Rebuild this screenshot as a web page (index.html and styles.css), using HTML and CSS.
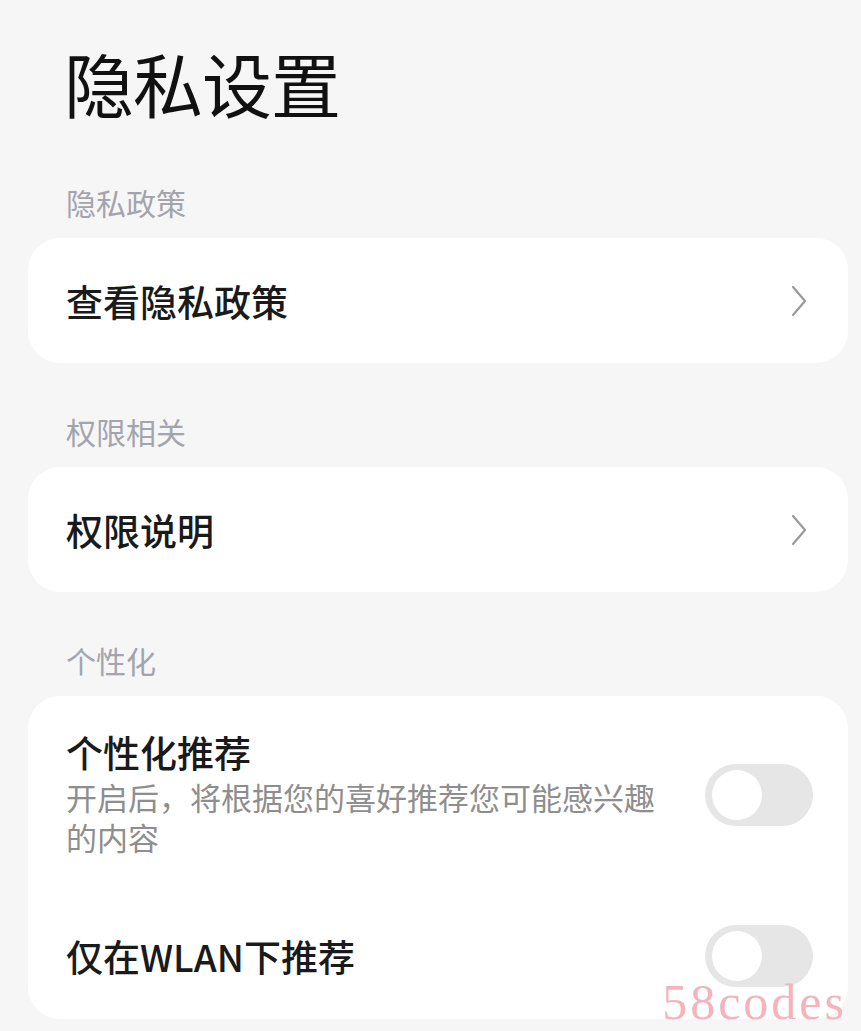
FILE: index.html
```html
<!DOCTYPE html>
<html lang="zh-CN">
<head>
<meta charset="utf-8">
<title>隐私设置</title>
<link rel="stylesheet" href="styles.css">
</head>
<body>
<div class="page">
  <h1 class="title">隐私设置</h1>

  <div class="section-label">隐私政策</div>
  <div class="card">
    <div class="row link">
      <span class="row-title">查看隐私政策</span>
      <svg class="chev" width="18" height="34" viewBox="0 0 18 34"><polyline points="3,3 15,17 3,31" fill="none" stroke="#9a9a9a" stroke-width="2.2" stroke-linecap="round" stroke-linejoin="round"/></svg>
    </div>
  </div>

  <div class="section-label">权限相关</div>
  <div class="card">
    <div class="row link">
      <span class="row-title">权限说明</span>
      <svg class="chev" width="18" height="34" viewBox="0 0 18 34"><polyline points="3,3 15,17 3,31" fill="none" stroke="#9a9a9a" stroke-width="2.2" stroke-linecap="round" stroke-linejoin="round"/></svg>
    </div>
  </div>

  <div class="section-label">个性化</div>
  <div class="card">
    <div class="row toggle-row first">
      <div class="row-text">
        <div class="row-title">个性化推荐</div>
        <div class="row-sub">开启后，将根据您的喜好推荐您可能感兴趣的内容</div>
      </div>
      <div class="switch"><span class="knob"></span></div>
    </div>
    <div class="row toggle-row second">
      <div class="row-title">仅在WLAN下推荐</div>
      <div class="switch"><span class="knob"></span></div>
    </div>
  </div>

  <div class="watermark">58codes</div>
</div>
</body>
</html>
```

FILE: styles.css
```css
html, body {
  margin: 0;
  padding: 0;
}
body {
  background: #f6f6f6;
  font-family: "Noto Sans CJK SC", "Noto Sans", sans-serif;
  width: 861px;
  height: 1031px;
  overflow: hidden;
}
.page {
  position: relative;
  height: 1031px;
  padding: 40px 13px 0 28px;
  box-sizing: border-box;
  display: flex;
  flex-direction: column;
}
.title {
  margin: 0 0 0 36px;
  font-size: 70px;
  line-height: 85px;
  font-weight: 400;
  color: #111;
  letter-spacing: -1px;
}
.section-label {
  margin: 57px 0 16px 38px;
  font-size: 30px;
  line-height: 40px;
  color: #a4a4ac;
}
.card + .section-label {
  margin-top: 48px;
}
.card {
  background: #fff;
  border-radius: 32px;
}
.row {
  display: flex;
  align-items: center;
  justify-content: space-between;
  padding: 0 35px 0 38px;
}
.row.link {
  height: 125px;
  padding-right: 40px;
}
.row-title {
  font-size: 37px;
  line-height: 44px;
  font-weight: 500;
  color: #1a1a1a;
}
.row-sub {
  margin-top: 3px;
  font-size: 31px;
  line-height: 40px;
  color: #8e8e8e;
  width: 600px;
}
.toggle-row.first {
  padding-top: 34px;
  padding-bottom: 36px;
}
.toggle-row.second {
  height: 126px;
}
.switch {
  width: 108px;
  height: 62px;
  border-radius: 31px;
  background: #e6e6e6;
  display: flex;
  align-items: center;
  padding-left: 7px;
  box-sizing: border-box;
  flex-shrink: 0;
}
.toggle-row.first .switch {
  margin-top: 2px;
}
.knob {
  width: 50px;
  height: 50px;
  border-radius: 50%;
  background: #fff;
}
.watermark {
  position: absolute;
  right: 14px;
  bottom: 4px;
  font-family: "Liberation Serif", serif;
  font-size: 50px;
  letter-spacing: 3px;
  color: #f5b4bc;
  line-height: 1;
}
```
